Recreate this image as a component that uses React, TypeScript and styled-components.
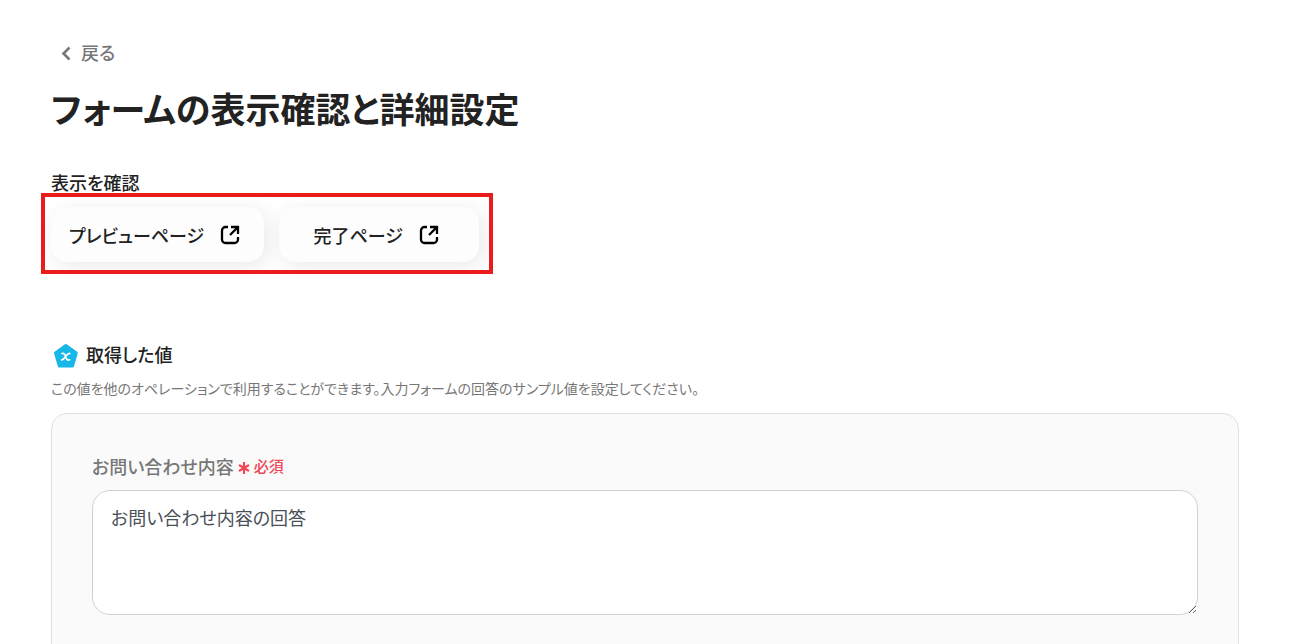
import React from 'react';
import styled, { createGlobalStyle } from 'styled-components';

const GlobalStyle = createGlobalStyle`
  *, *::before, *::after { box-sizing: border-box; }
  body {
    margin: 0;
    background: #fff;
    color: #222;
    font-family: "Noto Sans CJK JP", sans-serif;
    font-feature-settings: "palt";
    font-size: 18px;
    line-height: 24px;
  }
  h1, h2, p { margin: 0; }
  button, textarea { font: inherit; font-feature-settings: inherit; }
`;

const Page = styled.main`
  padding: 38px 51px 0;
`;

const BackLink = styled.a`
  display: inline-flex;
  align-items: center;
  gap: 8px;
  padding: 2px 8px;
  color: #777;
  font-weight: 500;
  text-decoration: none;
`;

const Title = styled.h1`
  margin-top: 16px;
  font-size: 35px;
  line-height: 52px;
  font-weight: 700;
`;

const SectionLabel = styled.h2`
  font-size: 18px;
  line-height: 24px;
  font-weight: 500;
`;

const PreviewSection = styled.section`
  margin-top: 36px;
`;

const ButtonRow = styled.div`
  position: relative;
  display: flex;
  gap: 15px;
  width: fit-content;
  margin-top: 13px;
`;

const Highlight = styled.div`
  position: absolute;
  inset: -14px -14px -12px -10px;
  border: 4px solid #ea1c1c;
  pointer-events: none;
`;

const PageButton = styled.button`
  display: flex;
  align-items: center;
  justify-content: center;
  gap: 10px;
  min-width: 200px;
  height: 55px;
  padding: 0 18px;
  border: 0;
  border-radius: 16px;
  background: #fdfdfd;
  box-shadow: 4px 4px 20px rgba(0, 0, 0, 0.09);
  color: #222;
  font-weight: 500;
  white-space: nowrap;
`;

const ValuesSection = styled.section`
  margin-top: 78px;
`;

const ValuesHeading = styled.div`
  display: flex;
  align-items: center;
  gap: 6px;
`;

const Description = styled.p`
  margin-top: 10px;
  color: #777;
  font-size: 14px;
  line-height: 20px;
`;

const Panel = styled.div`
  margin-top: 15px;
  padding: 40px 40px 60px;
  border: 1px solid #dfe1e5;
  border-radius: 16px;
  background: #fafafa;
`;

const FieldLabel = styled.label`
  display: flex;
  align-items: center;
  gap: 4px;
  color: #777;
  font-weight: 500;
`;

const Required = styled.span`
  display: inline-flex;
  align-items: center;
  gap: 4px;
  color: #f04858;
  font-size: 15px;
`;

const TextArea = styled.textarea`
  display: block;
  width: 100%;
  height: 125px;
  margin-top: 12px;
  padding: 14px 18px;
  border: 1px solid #ced2d8;
  border-radius: 18px;
  background: #fff;
  color: #495057;
  outline: 0;
  resize: vertical;
`;

const ChevronIcon = () => (
  <svg width="14" height="20" viewBox="0 0 14 20" fill="none" stroke="#777" strokeWidth="2.6" aria-hidden="true">
    <path d="M10.500 5.500 4.500 11.500l6 6" />
  </svg>
);

const ExternalIcon = () => (
  <svg width="32" height="32" viewBox="0 0 32 32" fill="none" stroke="#000" strokeWidth="2.300" aria-hidden="true">
    <path d="M14 8H11.500a3.500 3.500 0 0 0-3.500 3.500v9a3.500 3.500 0 0 0 3.500 3.500h9a3.500 3.500 0 0 0 3.500-3.500V18" />
    <path d="M17 8H24v7M24 8l-8 8" />
  </svg>
);

const PentagonIcon = () => (
  <svg width="29" height="28" viewBox="0 0 29 28" aria-hidden="true">
    <path
      d="M14.800 5.500 25.300 13 21.500 26H8.300L4.500 13Z"
      fill="#17b8e8"
      stroke="#17b8e8"
      strokeWidth="3"
      strokeLinejoin="round"
    />
    <path
      d="M11 13.500c2.200-.6 2.900.5 3.600 3s1.500 4.200 4 3.300M18.700 13.300c-2 .2-3 1.500-4.100 3.200s-2.100 3-4 3.500"
      fill="none"
      stroke="#fff"
      strokeWidth="1.700"
      strokeLinecap="round"
    />
  </svg>
);

const AsteriskIcon = () => (
  <svg width="12" height="16" viewBox="0 0 12 16" fill="none" stroke="#f04858" strokeWidth="2.200" aria-hidden="true">
    <path d="M6 4v12M1 7l10 6M11 7 1 13" />
  </svg>
);

export default function App() {
  return (
    <>
      <GlobalStyle />
      <Page>
        <BackLink href="#back">
          <ChevronIcon />
          戻る
        </BackLink>
        <Title>フォームの表示確認と詳細設定</Title>

        <PreviewSection>
          <SectionLabel>表示を確認</SectionLabel>
          <ButtonRow>
            <PageButton type="button">
              プレビューページ
              <ExternalIcon />
            </PageButton>
            <PageButton type="button">
              完了ページ
              <ExternalIcon />
            </PageButton>
            <Highlight />
          </ButtonRow>
        </PreviewSection>

        <ValuesSection>
          <ValuesHeading>
            <PentagonIcon />
            <SectionLabel>取得した値</SectionLabel>
          </ValuesHeading>
          <Description>
            この値を他のオペレーションで利用することができます。入力フォームの回答のサンプル値を設定してください。
          </Description>
          <Panel>
            <FieldLabel htmlFor="inquiry">
              お問い合わせ内容
              <Required>
                <AsteriskIcon />
                必須
              </Required>
            </FieldLabel>
            <TextArea id="inquiry" defaultValue="お問い合わせ内容の回答" />
          </Panel>
        </ValuesSection>
      </Page>
    </>
  );
}
